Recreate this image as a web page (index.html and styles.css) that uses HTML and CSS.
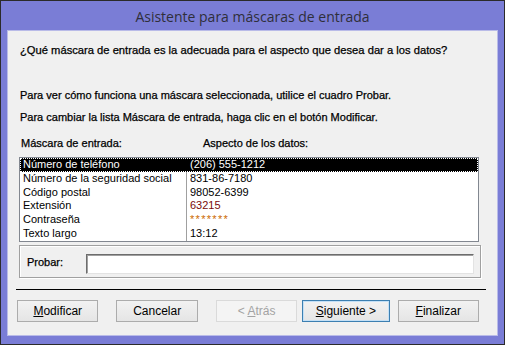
FILE: index.html
```html
<!DOCTYPE html>
<html lang="es">
<head>
    <meta charset="UTF-8">
    <title>Asistente para máscaras de entrada</title>
    <link rel="stylesheet" href="styles.css">
</head>
<body>
    <div class="window">
        <div class="titlebar">Asistente para máscaras de entrada</div>
        <div class="content">
            <p class="question">¿Qué máscara de entrada es la adecuada para el aspecto que desea dar a los datos?</p>
            <p class="hint first">Para ver cómo funciona una máscara seleccionada, utilice el cuadro Probar.</p>
            <p class="hint">Para cambiar la lista Máscara de entrada, haga clic en el botón Modificar.</p>

            <div class="labels">
                <span class="label-mask">Máscara de entrada:</span>
                <span class="label-look">Aspecto de los datos:</span>
            </div>

            <div class="listbox">
                <div class="row selected">
                    <span class="name">Número de teléfono</span>
                    <span class="value">(206) 555-1212</span>
                </div>
                <div class="row">
                    <span class="name">Número de la seguridad social</span>
                    <span class="value">831-86-7180</span>
                </div>
                <div class="row">
                    <span class="name">Código postal</span>
                    <span class="value">98052-6399</span>
                </div>
                <div class="row">
                    <span class="name">Extensión</span>
                    <span class="value red">63215</span>
                </div>
                <div class="row">
                    <span class="name">Contraseña</span>
                    <span class="value orange">*******</span>
                </div>
                <div class="row">
                    <span class="name">Texto largo</span>
                    <span class="value">13:12</span>
                </div>
            </div>

            <div class="try-group">
                <label class="try-label" for="probar">Probar:</label>
                <input class="try-input" id="probar" type="text">
            </div>

            <div class="separator"></div>

            <div class="buttons">
                <button class="btn"><u>M</u>odificar</button>
                <button class="btn">Cancelar</button>
                <button class="btn disabled">&lt; <u>A</u>trás</button>
                <button class="btn default"><u>S</u>iguiente &gt;</button>
                <button class="btn"><u>F</u>inalizar</button>
            </div>
        </div>
    </div>
</body>
</html>
```

FILE: styles.css
```css
* {
    box-sizing: border-box;
    margin: 0;
    padding: 0;
}

body {
    background-color: #ffffff;
    font-family: 'Liberation Sans', Arial, sans-serif;
    font-size: 11px;
    color: #000000;
}

.window {
    width: 505px;
    height: 345px;
    border: 1px solid #2b2b2b;
    background-color: #7a7dd6;
    padding: 0 6px 8px 6px;
    display: flex;
    flex-direction: column;
}

.titlebar {
    height: 29px;
    line-height: 31px;
    text-align: center;
    font-family: 'Open Sans', 'Noto Sans', sans-serif;
    font-size: 14px;
    color: #2f2f3a;
}

.content {
    flex: 1;
    background-color: #f0f0f0;
    border: 1px solid #b9bbe8;
    padding: 12px 0 0 12px;
}

.question,
.hint,
.labels,
.try-label {
    -webkit-text-stroke: 0.25px #000000;
}

.question {
    font-size: 11.2px;
}

.question,
.hint {
    line-height: 14px;
    height: 14px;
}

.hint.first {
    margin-top: 31px;
}

.hint {
    margin-top: 8px;
}

.labels {
    margin-top: 12px;
    height: 14px;
    line-height: 14px;
    display: flex;
}

.label-mask {
    width: 183px;
    padding-left: 1px;
}

.listbox {
    margin: 7px 0 0 -1px;
    width: 460px;
    height: 85px;
    border: 1px solid #828790;
    background-color: #ffffff;
    overflow: hidden;
}

.row {
    display: flex;
    height: 13.8px;
    line-height: 13.8px;
}

.name {
    width: 167px;
    padding-left: 3px;
    border-right: 1px solid #a0a0a0;
    white-space: nowrap;
}

.value {
    padding-left: 3px;
}

.red {
    color: #7a0a0a;
}

.orange {
    color: #cc6a00;
    letter-spacing: 1.3px;
}

.row.selected {
    background-color: #000000;
    color: #ffffff;
    outline: 1px dotted #ffffff;
    outline-offset: -1px;
}

.row.selected .name {
    border-right-color: #000000;
}

.try-group {
    margin: 3px 0 0 -1px;
    width: 462px;
    height: 33px;
    border: 1px solid #a0a0a0;
    box-shadow: inset 1px 1px 0 #ffffff, 1px 1px 0 #ffffff;
    display: flex;
    align-items: center;
    padding-left: 7px;
}

.try-label {
    width: 59px;
}

.try-input {
    width: 388px;
    height: 20px;
    margin-top: 4px;
    border: 1px solid;
    border-color: #6d6d6d #e3e3e3 #e3e3e3 #6d6d6d;
    box-shadow: inset 1px 1px 0 #a0a0a0;
    background-color: #ffffff;
    outline: none;
}

.separator {
    margin: 11px 0 0 -4px;
    width: 470px;
    height: 1px;
    background-color: #000000;
}

.buttons {
    display: flex;
    margin: 10px 0 0 -3px;
}

.btn {
    width: 84px;
    height: 22px;
    margin-right: 18px;
    font-family: 'Liberation Sans', Arial, sans-serif;
    font-size: 12px;
    color: #000000;
    background: linear-gradient(#f2f2f2, #e5e5e5);
    border: 1px solid #acacac;
}

.btn:nth-child(3) {
    margin-right: 5px;
}

.btn:nth-child(4) {
    width: 90px;
    margin-right: 8px;
}

.btn.disabled {
    color: #a3a3a3;
    background: #f4f4f4;
    border-color: #dadada;
}

.btn.default {
    border-color: #3c7fb1;
    box-shadow: inset 0 0 0 1px #c4e0f6;
}
```
